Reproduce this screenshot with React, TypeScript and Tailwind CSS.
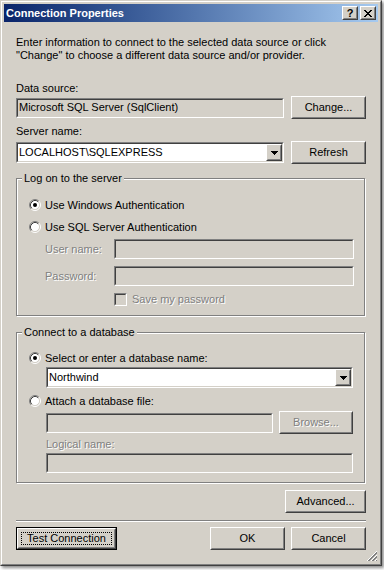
import type { ReactNode } from 'react';

// Classic (Windows 2000 style) bevel helpers
function Raised({ children, className = '' }: { children?: ReactNode; className?: string }) {
  return (
    <div
      className={`border border-t-white border-l-white border-r-[#404040] border-b-[#404040] bg-[#d4d0c8] ${className}`}
    >
      <div className="flex h-full w-full items-center justify-center border border-t-[#d4d0c8] border-l-[#d4d0c8] border-r-[#808080] border-b-[#808080]">
        {children}
      </div>
    </div>
  );
}

function Sunken({ children, className = '', inner = 'bg-white' }: { children?: ReactNode; className?: string; inner?: string }) {
  return (
    <div className={`border border-t-[#808080] border-l-[#808080] border-r-white border-b-white ${className}`}>
      <div className={`flex h-full w-full items-center border border-t-[#404040] border-l-[#404040] border-r-[#d4d0c8] border-b-[#d4d0c8] ${inner}`}>
        {children}
      </div>
    </div>
  );
}

function Button({ label, className = '', disabled = false }: { label: string; className?: string; disabled?: boolean }) {
  return (
    <Raised className={`h-[23px] ${className}`}>
      <span className={disabled ? 'text-[#808080] [text-shadow:1px_1px_0_#fff]' : ''}>{label}</span>
    </Raised>
  );
}

function ComboBox({ value, className = '' }: { value: string; className?: string }) {
  return (
    <Sunken className={`h-[21px] ${className}`}>
      <span className="flex-1 pl-[1px] leading-[13px]">{value}</span>
      <Raised className="h-full w-[16px]">
        <svg width="7" height="4" viewBox="0 0 7 4" shapeRendering="crispEdges">
          <path d="M0 0h7v1H0zM1 1h5v1H1zM2 2h3v1H2zM3 3h1v1H3z" fill="#000" />
        </svg>
      </Raised>
    </Sunken>
  );
}

function Radio({ checked, label }: { checked: boolean; label: string }) {
  return (
    <div className="flex h-[16px] items-center gap-[4px]">
      <svg width="12" height="12" viewBox="0 0 12 12">
        <circle cx="6" cy="6" r="4.5" fill="#fff" />
        <path d="M2.11 9.89 A5.5 5.5 0 0 1 9.89 2.11" fill="none" stroke="#808080" />
        <path d="M9.89 2.11 A5.5 5.5 0 0 1 2.11 9.89" fill="none" stroke="#fff" />
        <path d="M2.82 9.18 A4.5 4.5 0 0 1 9.18 2.82" fill="none" stroke="#404040" />
        <path d="M9.18 2.82 A4.5 4.5 0 0 1 2.82 9.18" fill="none" stroke="#d4d0c8" />
        {checked && <circle cx="6" cy="6" r="2" fill="#000" />}
      </svg>
      <span>{label}</span>
    </div>
  );
}

const disabledText = 'text-[#808080] [text-shadow:1px_1px_0_#fff]';

function GroupBox({ title, children, className = '' }: { title: string; children: ReactNode; className?: string }) {
  return (
    <fieldset
      className={`w-[349px] border border-[#808080] shadow-[inset_1px_1px_0_#fff,1px_1px_0_#fff] ${className}`}
    >
      <legend className="ml-[5px] bg-[#d4d0c8] px-[2px] leading-[13px]">{title}</legend>
      <div className="pb-[9px] pl-[12px]">{children}</div>
    </fieldset>
  );
}

export default function App() {
  return (
    <div className="h-[570px] w-[384px] bg-white font-['Liberation_Sans',Arial,sans-serif] text-[11px] leading-[13px] text-black">
      {/* Window frame */}
      <div className="relative h-[566px] w-[382px] border border-t-[#d4d0c8] border-l-[#d4d0c8] border-r-[#404040] border-b-[#404040] bg-[#d4d0c8] shadow-[2px_2px_3px_rgba(0,0,0,0.45)]">
        <div className="h-full w-full border border-t-white border-l-white border-r-[#808080] border-b-[#808080] p-[2px]">
          {/* Title bar */}
          <div className="flex h-[18px] items-center justify-between bg-linear-to-r from-[#0a246a] to-[#a6caf0] pl-[2px] pr-[2px]">
            <span className="text-[11px] font-bold text-white">Connection Properties</span>
            <div className="flex gap-[2px]">
              <Raised className="h-[14px] w-[16px]">
                <span className="text-[11px] leading-[10px] font-bold">?</span>
              </Raised>
              <Raised className="h-[14px] w-[16px]">
                <svg width="8" height="7" viewBox="0 0 8 7" shapeRendering="crispEdges">
                  <path
                    d="M0 0h2v1H0zM6 0h2v1H6zM1 1h2v1H1zM5 1h2v1H5zM2 2h4v1H2zM3 3h2v1H3zM2 4h4v1H2zM1 5h2v1H1zM5 5h2v1H5zM0 6h2v1H0zM6 6h2v1H6z"
                    fill="#000"
                  />
                </svg>
              </Raised>
            </div>
          </div>

          {/* Client area */}
          <div className="flex flex-col px-[12px]">
            <p className="mt-[14px]">
              Enter information to connect to the selected data source or click
              <br />
              "Change" to choose a different data source and/or provider.
            </p>

            <span className="mt-[20px]">Data source:</span>
            <div className="mt-[1px] flex h-[23px] items-center justify-between">
              <Sunken className="h-[20px] w-[268px]" inner="bg-[#d4d0c8]">
                <span className="pl-[1px]">Microsoft SQL Server (SqlClient)</span>
              </Sunken>
              <Button label="Change..." className="w-[75px]" />
            </div>

            <span className="mt-[6px]">Server name:</span>
            <div className="mt-[3px] flex h-[23px] items-center justify-between">
              <ComboBox value="LOCALHOST\SQLEXPRESS" className="w-[268px]" />
              <Button label="Refresh" className="w-[75px]" />
            </div>

            {/* Log on group */}
            <GroupBox title="Log on to the server" className="mt-[8px]">
              <div className="mt-[12px] flex flex-col gap-[6px]">
                <Radio checked label="Use Windows Authentication" />
                <Radio checked={false} label="Use SQL Server Authentication" />
              </div>
              <div className="mt-[4px] flex flex-col gap-[7px] pl-[16px]">
                <div className="flex items-center">
                  <span className={`w-[69px] ${disabledText}`}>User name:</span>
                  <Sunken className="h-[20px] w-[240px]" inner="bg-[#d4d0c8]" />
                </div>
                <div className="flex items-center">
                  <span className={`w-[69px] ${disabledText}`}>Password:</span>
                  <Sunken className="h-[20px] w-[240px]" inner="bg-[#d4d0c8]" />
                </div>
              </div>
              <div className="mt-[7px] flex items-center gap-[5px] pl-[85px]">
                <Sunken className="h-[13px] w-[13px]" inner="bg-[#d4d0c8]" />
                <span className={disabledText}>Save my password</span>
              </div>
            </GroupBox>

            {/* Database group */}
            <GroupBox title="Connect to a database" className="mt-[10px]">
              <div className="mt-[11px]">
                <Radio checked label="Select or enter a database name:" />
              </div>
              <ComboBox value="Northwind" className="mt-[1px] ml-[17px] w-[307px]" />
              <div className="mt-[5px]">
                <Radio checked={false} label="Attach a database file:" />
              </div>
              <div className="mt-[2px] ml-[17px] flex h-[23px] w-[307px] items-center justify-between">
                <Sunken className="h-[20px] w-[227px]" inner="bg-[#d4d0c8]" />
                <Button label="Browse..." className="w-[74px]" disabled />
              </div>
              <span className={`mt-[4px] ml-[17px] block ${disabledText}`}>Logical name:</span>
              <Sunken className="mt-[2px] ml-[17px] h-[20px] w-[307px]" inner="bg-[#d4d0c8]" />
            </GroupBox>

            <div className="mt-[7px] flex justify-end">
              <Button label="Advanced..." className="w-[81px]" />
            </div>

            {/* Separator */}
            <div className="mt-[7px] h-[2px] border-t border-t-[#808080] border-b border-b-white" />

            <div className="mt-[5px] flex items-center">
              {/* Default button with focus rectangle */}
              <div className="h-[23px] w-[101px] border border-black">
                <Raised className="h-full w-full">
                  <div className="flex h-[calc(100%-4px)] w-[calc(100%-4px)] items-center justify-center border border-dotted border-black">
                    Test Connection
                  </div>
                </Raised>
              </div>
              <div className="ml-auto flex gap-[6px]">
                <Button label="OK" className="w-[75px]" />
                <Button label="Cancel" className="w-[75px]" />
              </div>
            </div>
          </div>
        </div>

        {/* Size grip */}
        <svg className="absolute right-[3px] bottom-[3px]" width="12" height="12" viewBox="0 0 12 12">
          <path d="M11 1L1 11M11 5L5 11M11 9L9 11" stroke="#fff" />
          <path d="M11 2L2 11M11 3L3 11M11 6L6 11M11 7L7 11M11 10L10 11" stroke="#808080" />
        </svg>
      </div>
    </div>
  );
}
